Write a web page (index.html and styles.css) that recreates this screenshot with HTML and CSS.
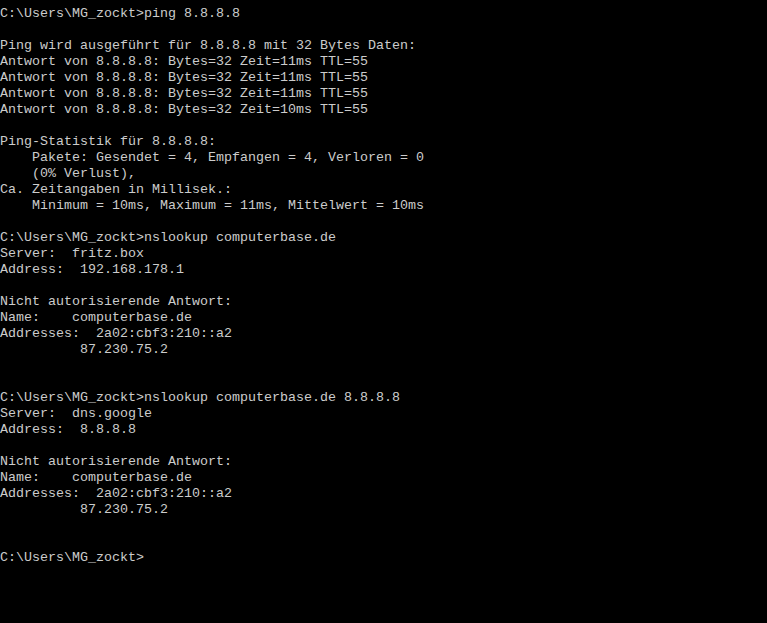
FILE: index.html
```html
<!DOCTYPE html>
<html lang="de">
<head>
<meta charset="utf-8">
<title>Eingabeaufforderung</title>
<link rel="stylesheet" href="styles.css">
</head>
<body>
<pre class="console">C:\Users\MG_zockt&gt;ping 8.8.8.8

Ping wird ausgeführt für 8.8.8.8 mit 32 Bytes Daten:
Antwort von 8.8.8.8: Bytes=32 Zeit=11ms TTL=55
Antwort von 8.8.8.8: Bytes=32 Zeit=11ms TTL=55
Antwort von 8.8.8.8: Bytes=32 Zeit=11ms TTL=55
Antwort von 8.8.8.8: Bytes=32 Zeit=10ms TTL=55

Ping-Statistik für 8.8.8.8:
    Pakete: Gesendet = 4, Empfangen = 4, Verloren = 0
    (0% Verlust),
Ca. Zeitangaben in Millisek.:
    Minimum = 10ms, Maximum = 11ms, Mittelwert = 10ms

C:\Users\MG_zockt&gt;nslookup computerbase.de
Server:  fritz.box
Address:  192.168.178.1

Nicht autorisierende Antwort:
Name:    computerbase.de
Addresses:  2a02:cbf3:210::a2
          87.230.75.2


C:\Users\MG_zockt&gt;nslookup computerbase.de 8.8.8.8
Server:  dns.google
Address:  8.8.8.8

Nicht autorisierende Antwort:
Name:    computerbase.de
Addresses:  2a02:cbf3:210::a2
          87.230.75.2


C:\Users\MG_zockt&gt;</pre>
</body>
</html>
```
FILE: styles.css
```css
html, body {
  margin: 0;
  padding: 0;
  background: #000000;
  height: 100%;
}
body {
  overflow: hidden;
}
.console {
  margin: 0;
  padding: 6px 0 0 0;
  font-family: "Liberation Mono", "DejaVu Sans Mono", monospace;
  font-size: 13.33px;
  line-height: 16px;
  color: #cccccc;
  white-space: pre;
}
```
